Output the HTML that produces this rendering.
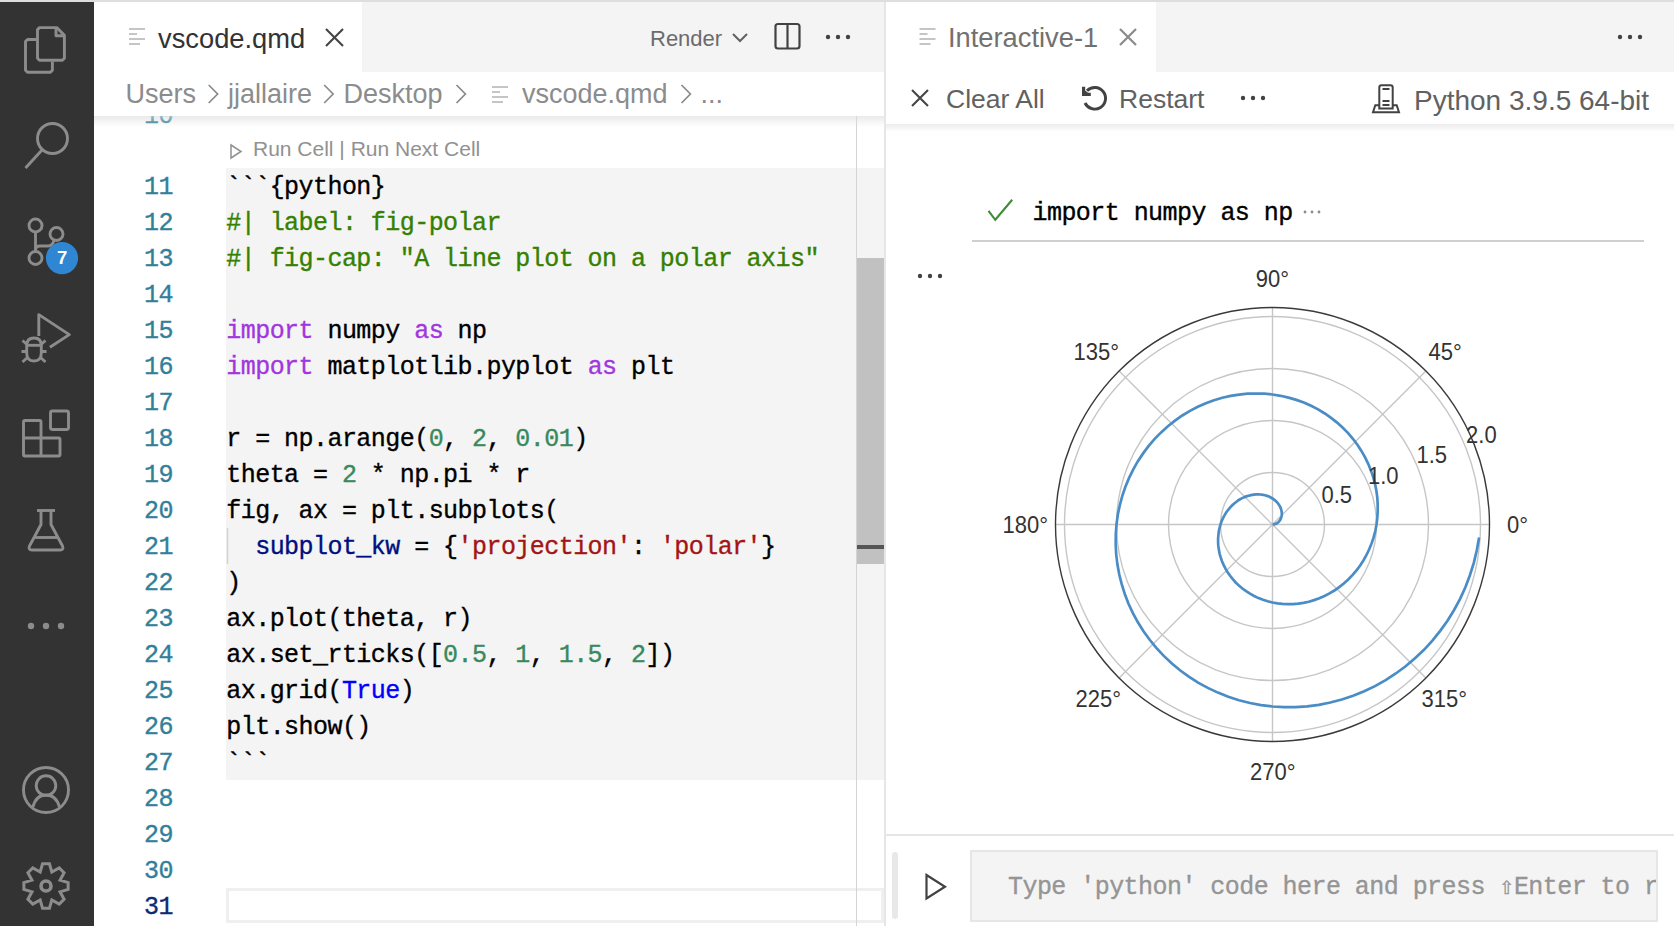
<!DOCTYPE html>
<html><head><meta charset="utf-8">
<style>
*{box-sizing:border-box;margin:0;padding:0}
html,body{width:1674px;height:926px;overflow:hidden;background:#fff;font-family:"Liberation Sans",sans-serif}
.abs{position:absolute}
#topline{position:absolute;left:0;top:0;width:1674px;height:2px;background:#dedede}
#act{position:absolute;left:0;top:2px;width:94px;height:924px;background:#333333}
#act svg{position:absolute;left:0;top:0}
/* left group */
#ltabs{position:absolute;left:94px;top:2px;width:790px;height:70px;background:#f4f4f4}
#ltab{position:absolute;left:94px;top:2px;width:268px;height:70px;background:#fff}
.ui{position:absolute;white-space:nowrap;line-height:1}
#crumbs{position:absolute;left:94px;top:72px;width:790px;height:44px;background:#fff}
#eshadow{position:absolute;left:94px;top:116px;width:790px;height:11px;background:linear-gradient(rgba(221,221,221,0.62),rgba(221,221,221,0))}
.ln{-webkit-text-stroke:0.35px currentColor;position:absolute;left:94px;width:79px;text-align:right;font-family:"Liberation Mono",monospace;font-size:25px;letter-spacing:-0.55px;padding-top:2px;line-height:36px;height:36px;color:#31809b}
.ln.cur{color:#0f2a75}
.cl{-webkit-text-stroke:0.35px currentColor;position:absolute;left:226.3px;font-family:"Liberation Mono",monospace;font-size:25px;letter-spacing:-0.55px;padding-top:2px;line-height:36px;height:36px;white-space:pre;color:#000}
.k{color:#000}.c{color:#348000}.p{color:#a236de}.n{color:#39895e}.v{color:#001080}.s{color:#a31515}.b{color:#0000ff}
#cellbg{position:absolute;left:226px;top:168px;width:658px;height:612px;background:#f4f4f4}
#sbtrack{position:absolute;left:856px;top:116px;width:28px;height:810px}
#sbline{position:absolute;left:856px;top:116px;width:1px;height:810px;background:#d4d4d4}
#slider{position:absolute;left:857px;top:258px;width:27px;height:306px;background:#c1c1c1}
#cursormark{position:absolute;left:857px;top:545px;width:27px;height:4px;background:#555}
#curline{position:absolute;left:226px;top:888px;width:658px;height:35px;border:3px solid #efefef}
#border{position:absolute;left:884px;top:2px;width:2px;height:924px;background:#e6e6e6}
/* right group */
#rtabs{position:absolute;left:886px;top:2px;width:788px;height:70px;background:#f4f4f4}
#rtab{position:absolute;left:886px;top:2px;width:270px;height:70px;background:#fff}
#rtool{position:absolute;left:886px;top:72px;width:788px;height:52px;background:#fff}
#rshadow{position:absolute;left:886px;top:124px;width:788px;height:8px;background:linear-gradient(#ececec,rgba(255,255,255,0))}
#sep{position:absolute;left:972px;top:240px;width:672px;height:2px;background:#d0d0d0}
#bline{position:absolute;left:886px;top:834px;width:788px;height:2px;background:#e6e6e6}
#ibar{position:absolute;left:892px;top:852px;width:6px;height:67px;border-radius:3px;background:#e8e8e8}
#ibox{position:absolute;left:970px;top:850px;width:688px;height:72px;background:#f4f4f4;border:2px solid #e6e6e6;overflow:hidden}
.mono{-webkit-text-stroke:0.35px currentColor;font-family:"Liberation Mono",monospace;font-size:25px;letter-spacing:-0.55px;white-space:pre;line-height:1}
.plt{font-family:"Liberation Sans",sans-serif;font-size:22px;color:#333;position:absolute;white-space:nowrap;line-height:1;transform:translate(-50%,-50%) scaleY(1.1)}
</style></head><body>
<div id="topline"></div>
<div id="act">
<svg width="94" height="924" viewBox="0 2 94 924" fill="none" stroke="#8c8c8c" stroke-width="2.9" stroke-linejoin="round">
  <!-- files -->
  <path d="M36 39.5 H27.5 L25.5 41.5 V70.3 L27.5 72.3 H50.4 L52.4 70.3 V61.5"/>
  <path d="M39.5 27.6 H56.8 L64.4 35.2 V58.3 L62.4 60.3 H39.5 L37.5 58.3 V29.6 Z"/>
  <path d="M56 28 V35.8 H64.4"/>
  <!-- search -->
  <circle cx="52.5" cy="138.5" r="15"/>
  <path d="M42 150 L25.5 168"/>
  <!-- scm -->
  <circle cx="35.5" cy="225.5" r="6.5"/>
  <circle cx="56.5" cy="234" r="6.5"/>
  <circle cx="35.5" cy="258" r="6.5"/>
  <path d="M35.5 232 V251.5"/>
  <path d="M35.5 250 Q35.5 246 40 246 H48 Q53 246 54 240"/>
  <!-- run debug -->
  <path d="M38.8 336 V314.6 L69.3 334.6 L49.9 347.2"/>
  <path d="M26.7 345.5 Q26.7 338 34 338 Q41.3 338 41.3 345.5 V353 Q41.3 361 34 361 Q26.7 361 26.7 353 Z"/>
  <path d="M27 345.3 H41" />
  <path d="M21.5 351.5 H26.7 M41.3 351.5 H46.5 M22.5 340.5 L27.5 345 M45.5 340.5 L40.5 345 M22.5 362 L27.5 357.5 M45.5 362 L40.5 357.5"/>
  <!-- extensions -->
  <rect x="50.5" y="411" width="18" height="18.5" rx="2"/>
  <path d="M23.5 422 Q23.5 420.5 25 420.5 H39.5 Q41 420.5 41 422 V438 H58.5 Q60 438 60 439.5 V454.5 Q60 456 58.5 456 H25 Q23.5 456 23.5 454.5 Z"/>
  <path d="M23.5 438 H41 V456"/>
  <!-- flask -->
  <path d="M37 510.5 H55"/>
  <path d="M41 510.5 V524.5 L29.5 546 Q28 550 32 550 H60 Q64 550 62.5 546 L51 524.5 V510.5"/>
  <path d="M34.5 537.5 H57.5"/>
  <!-- account -->
  <circle cx="46" cy="790" r="22.5"/>
  <circle cx="46" cy="785.6" r="9.8"/>
  <path d="M33 807 Q36 795 46 795 Q56 795 59.5 807"/>
  <!-- gear -->
  <path id="gear" d="M42.54 863.87 L49.46 863.87 L51.82 871.96 L59.20 867.91 L64.09 872.80 L60.04 880.18 L68.13 882.54 L68.13 889.46 L60.04 891.82 L64.09 899.20 L59.20 904.09 L51.82 900.04 L49.46 908.13 L42.54 908.13 L40.18 900.04 L32.80 904.09 L27.91 899.20 L31.96 891.82 L23.87 889.46 L23.87 882.54 L31.96 880.18 L27.91 872.80 L32.80 867.91 L40.18 871.96 Z" stroke-width="3" stroke-linejoin="miter"/>
  <circle cx="46" cy="886" r="5" stroke-width="3.6"/>
</svg>
<svg width="94" height="924" viewBox="0 2 94 924" style="position:absolute;left:0;top:0">
  <circle cx="31" cy="626" r="3.2" fill="#8c8c8c"/>
  <circle cx="46" cy="626" r="3.2" fill="#8c8c8c"/>
  <circle cx="61" cy="626" r="3.2" fill="#8c8c8c"/>
  <circle cx="62" cy="258.1" r="16.1" fill="#2f86d3"/>
  <text x="62.2" y="264.3" text-anchor="middle" font-family="Liberation Sans" font-weight="bold" font-size="18.5" fill="#fff">7</text>
</svg>
</div>

<!-- LEFT EDITOR GROUP -->
<div id="ltabs"></div>
<div id="ltab"></div>

<div class="ui" style="left:158px;top:25px;font-size:27.3px;color:#333">vscode.qmd</div>
<div class="ui" style="left:650px;top:28px;font-size:22px;color:#6b6b6b">Render</div>
<!-- editor -->
<div id="cellbg"></div>
<div id="curline"></div>
<div class="ln" style="top:97px;">10</div>
<div class="ln" style="top:168px">11</div>
<div class="ln" style="top:204px">12</div>
<div class="ln" style="top:240px">13</div>
<div class="ln" style="top:276px">14</div>
<div class="ln" style="top:312px">15</div>
<div class="ln" style="top:348px">16</div>
<div class="ln" style="top:384px">17</div>
<div class="ln" style="top:420px">18</div>
<div class="ln" style="top:456px">19</div>
<div class="ln" style="top:492px">20</div>
<div class="ln" style="top:528px">21</div>
<div class="ln" style="top:564px">22</div>
<div class="ln" style="top:600px">23</div>
<div class="ln" style="top:636px">24</div>
<div class="ln" style="top:672px">25</div>
<div class="ln" style="top:708px">26</div>
<div class="ln" style="top:744px">27</div>
<div class="ln" style="top:780px">28</div>
<div class="ln" style="top:816px">29</div>
<div class="ln" style="top:852px">30</div>
<div class="ln cur" style="top:888px">31</div>
<svg class="abs" style="left:0;top:0" width="884" height="926" fill="none">
  <path d="M231 145 L241 151.5 L231 158 Z" stroke="#919191" stroke-width="1.5" stroke-linejoin="miter"/>
  <path d="M227.5 528 V564" stroke="#d3d3d3" stroke-width="1.5"/>
</svg>
<div class="ui" style="left:253px;top:138px;font-size:21px;color:#919191">Run Cell | Run Next Cell</div>
<div class="cl" style="top:168px"><span class="k">```{python}</span></div>
<div class="cl" style="top:204px"><span class="c">#| label: fig-polar</span></div>
<div class="cl" style="top:240px"><span class="c">#| fig-cap: &quot;A line plot on a polar axis&quot;</span></div>
<div class="cl" style="top:312px"><span class="p">import</span><span class="k"> numpy </span><span class="p">as</span><span class="k"> np</span></div>
<div class="cl" style="top:348px"><span class="p">import</span><span class="k"> matplotlib.pyplot </span><span class="p">as</span><span class="k"> plt</span></div>
<div class="cl" style="top:420px"><span class="k">r = np.arange(</span><span class="n">0</span><span class="k">, </span><span class="n">2</span><span class="k">, </span><span class="n">0.01</span><span class="k">)</span></div>
<div class="cl" style="top:456px"><span class="k">theta = </span><span class="n">2</span><span class="k"> * np.pi * r</span></div>
<div class="cl" style="top:492px"><span class="k">fig, ax = plt.subplots(</span></div>
<div class="cl" style="top:528px"><span class="k">  </span><span class="v">subplot_kw</span><span class="k"> = {</span><span class="s">&#x27;projection&#x27;</span><span class="k">: </span><span class="s">&#x27;polar&#x27;</span><span class="k">}</span></div>
<div class="cl" style="top:564px"><span class="k">)</span></div>
<div class="cl" style="top:600px"><span class="k">ax.plot(theta, r)</span></div>
<div class="cl" style="top:636px"><span class="k">ax.set_rticks([</span><span class="n">0.5</span><span class="k">, </span><span class="n">1</span><span class="k">, </span><span class="n">1.5</span><span class="k">, </span><span class="n">2</span><span class="k">])</span></div>
<div class="cl" style="top:672px"><span class="k">ax.grid(</span><span class="b">True</span><span class="k">)</span></div>
<div class="cl" style="top:708px"><span class="k">plt.show()</span></div>
<div class="cl" style="top:744px"><span class="k">```</span></div>
<div id="sbline"></div>
<div id="slider"></div>
<div id="cursormark"></div>
<div id="eshadow"></div>
<div id="crumbs"></div>
<div class="ui" style="left:125.5px;top:80.7px;font-size:27px;color:#8c8c8c">Users</div>
<div class="ui" style="left:228px;top:80.7px;font-size:27px;color:#8c8c8c">jjallaire</div>
<div class="ui" style="left:343.5px;top:80.7px;font-size:27px;color:#8c8c8c">Desktop</div>
<div class="ui" style="left:522px;top:80.7px;font-size:27px;color:#8c8c8c">vscode.qmd</div>
<div class="ui" style="left:700.5px;top:80.7px;font-size:27px;color:#8c8c8c">...</div>

<svg class="abs" style="left:0;top:0" width="884" height="130" fill="none">
  <g stroke="#c5c5c5" stroke-width="2.2">
    <path d="M129 29 H145 M129 34 H137 M129 39 H145 M129 44 H140"/>
    <path d="M492 87 H508 M492 92 H500 M492 97 H508 M492 102 H503"/>
  </g>
  <path d="M326 29 L343 46 M343 29 L326 46" stroke="#444" stroke-width="2.1"/>
  <path d="M733 34 L740 41 L747 34" stroke="#616161" stroke-width="2"/>
  <rect x="775.5" y="24" width="24" height="24.5" rx="2.5" stroke="#424242" stroke-width="2.2"/>
  <path d="M787.5 24 V48.5" stroke="#424242" stroke-width="2.2"/>
  <g fill="#424242"><circle cx="828" cy="37" r="2.2"/><circle cx="838" cy="37" r="2.2"/><circle cx="848" cy="37" r="2.2"/></g>
  <g stroke="#8a8a8a" stroke-width="1.7">
    <path d="M208.7 85 L217.6 94 L208.7 103 M324.2 85 L333.1 94 L324.2 103 M456.5 85 L465.4 94 L456.5 103 M681.5 85 L690.4 94 L681.5 103"/>
  </g>
</svg>
<div id="border"></div>

<!-- RIGHT GROUP -->
<div id="rtabs"></div>
<div id="rtab"></div>
<div id="rtool"></div>
<div id="rshadow"></div>
<svg class="abs" style="left:886px;top:0" width="788" height="130" fill="none">
  <g transform="translate(-886 0)">
  <path d="M919.5 29 H935.5 M919.5 34 H927.5 M919.5 39 H935.5 M919.5 44 H930.5" stroke="#c5c5c5" stroke-width="2.2"/>
  <path d="M1120 29 L1136 45 M1136 29 L1120 45" stroke="#8a8a8a" stroke-width="2.2"/>
  <g fill="#424242"><circle cx="1620" cy="37" r="2.2"/><circle cx="1630" cy="37" r="2.2"/><circle cx="1640" cy="37" r="2.2"/></g>
  <path d="M912 90 L928 106 M928 90 L912 106" stroke="#444" stroke-width="2.05"/>
  <path d="M1087 90.8 A 10.8 10.8 0 1 1 1085 103" stroke="#424242" stroke-width="2.9"/>
  <path d="M1082 86.8 H1085.2 V90.5 L1088 92.8 H1090.8 V96 H1082 Z" fill="#424242"/>
  <g fill="#424242"><circle cx="1243" cy="98" r="2.2"/><circle cx="1253" cy="98" r="2.2"/><circle cx="1263" cy="98" r="2.2"/></g>
  <g stroke="#424242" stroke-width="2">
    <path d="M1379.3 108.5 V87.5 Q1379.3 85.3 1381.5 85.3 H1390.5 Q1392.7 85.3 1392.7 87.5 V108.5 Z"/>
    <path d="M1382.5 89 H1389.5 M1382.5 101 H1389.5 M1382.5 105 H1389.5"/>
    <path d="M1379.3 105.2 H1375.3 L1373 112.3 H1399 L1396.7 105.2 H1392.7"/>
  </g>
  </g>
</svg>
<div class="ui" style="left:948px;top:24px;font-size:27.3px;color:#717171">Interactive-1</div>
<div class="ui" style="left:946px;top:86px;font-size:26.5px;color:#616161">Clear All</div>
<div class="ui" style="left:1119px;top:86px;font-size:26.5px;color:#616161">Restart</div>
<div class="ui" style="left:1414px;top:87px;font-size:28px;color:#616161">Python 3.9.5 64-bit</div>

<svg class="abs" style="left:0;top:0" width="1674" height="926" fill="none">
  <path d="M988.5 210.8 L995.3 219.8 L1012.2 199.8" stroke="#3f8c38" stroke-width="2.1"/>
  <g fill="#8a8a8a"><circle cx="1305" cy="212" r="1.4"/><circle cx="1312" cy="212" r="1.4"/><circle cx="1319" cy="212" r="1.4"/></g>
  <g fill="#424242"><circle cx="920" cy="276" r="2.2"/><circle cx="930" cy="276" r="2.2"/><circle cx="940" cy="276" r="2.2"/></g>
  <!-- polar plot -->
  <g stroke="#c6c6c6" stroke-width="1.4">
    <circle cx="1272.5" cy="524.5" r="52"/>
    <circle cx="1272.5" cy="524.5" r="104"/>
    <circle cx="1272.5" cy="524.5" r="156"/>
    <circle cx="1272.5" cy="524.5" r="208"/>
    <path d="M1272.5 524.5 L1489.5 524.5 M1272.5 524.5 L1425.9 371.1 M1272.5 524.5 L1272.5 307.5 M1272.5 524.5 L1119.1 371.1 M1272.5 524.5 L1055.5 524.5 M1272.5 524.5 L1119.1 677.9 M1272.5 524.5 L1272.5 741.5 M1272.5 524.5 L1425.9 677.9"/>
  </g>
  <circle cx="1272.5" cy="524.5" r="217" stroke="#3a3a3a" stroke-width="1.4"/>
  <path d="M1272.5 524.5 L1273.5 524.4 L1274.6 524.2 L1275.6 523.9 L1276.5 523.5 L1277.4 522.9 L1278.3 522.2 L1279.1 521.4 L1279.8 520.5 L1280.4 519.5 L1280.9 518.4 L1281.3 517.2 L1281.6 516.0 L1281.8 514.6 L1281.8 513.3 L1281.7 511.9 L1281.4 510.5 L1281.0 509.0 L1280.5 507.6 L1279.8 506.1 L1278.9 504.7 L1277.9 503.3 L1276.8 502.0 L1275.5 500.8 L1274.1 499.6 L1272.5 498.5 L1270.8 497.5 L1269.0 496.6 L1267.0 495.9 L1265.0 495.3 L1262.9 494.8 L1260.6 494.5 L1258.3 494.4 L1256.0 494.4 L1253.6 494.6 L1251.1 495.1 L1248.6 495.7 L1246.2 496.4 L1243.7 497.4 L1241.2 498.6 L1238.8 500.0 L1236.5 501.7 L1234.2 503.5 L1232.0 505.5 L1230.0 507.7 L1228.0 510.0 L1226.2 512.6 L1224.5 515.3 L1223.0 518.2 L1221.6 521.3 L1220.5 524.5 L1219.6 527.8 L1218.8 531.3 L1218.4 534.8 L1218.1 538.5 L1218.1 542.2 L1218.3 545.9 L1218.9 549.7 L1219.6 553.6 L1220.7 557.4 L1222.0 561.2 L1223.6 564.9 L1225.5 568.6 L1227.6 572.3 L1230.1 575.8 L1232.8 579.2 L1235.7 582.5 L1238.9 585.6 L1242.4 588.5 L1246.1 591.2 L1250.0 593.7 L1254.1 596.0 L1258.5 598.1 L1263.0 599.8 L1267.7 601.3 L1272.5 602.5 L1277.5 603.4 L1282.5 603.9 L1287.7 604.2 L1292.9 604.1 L1298.2 603.6 L1303.5 602.8 L1308.8 601.7 L1314.1 600.1 L1319.3 598.3 L1324.5 596.0 L1329.5 593.4 L1334.4 590.5 L1339.2 587.1 L1343.8 583.5 L1348.2 579.5 L1352.4 575.2 L1356.3 570.6 L1360.0 565.7 L1363.4 560.5 L1366.5 555.0 L1369.2 549.3 L1371.6 543.4 L1373.6 537.3 L1375.3 531.0 L1376.5 524.5 L1377.3 517.9 L1377.7 511.2 L1377.7 504.4 L1377.3 497.6 L1376.4 490.8 L1375.0 483.9 L1373.2 477.1 L1370.9 470.4 L1368.2 463.8 L1365.1 457.3 L1361.4 450.9 L1357.4 444.8 L1352.9 438.8 L1348.1 433.1 L1342.8 427.7 L1337.1 422.6 L1331.1 417.9 L1324.8 413.5 L1318.1 409.4 L1311.1 405.8 L1303.8 402.6 L1296.3 399.9 L1288.5 397.6 L1280.6 395.8 L1272.5 394.5 L1264.3 393.7 L1255.9 393.5 L1247.6 393.7 L1239.1 394.6 L1230.7 395.9 L1222.3 397.8 L1214.0 400.3 L1205.9 403.3 L1197.8 406.8 L1190.0 410.9 L1182.3 415.5 L1175.0 420.6 L1167.9 426.3 L1161.1 432.4 L1154.7 438.9 L1148.7 445.9 L1143.1 453.4 L1137.9 461.2 L1133.3 469.4 L1129.1 477.9 L1125.4 486.7 L1122.3 495.9 L1119.8 505.2 L1117.8 514.8 L1116.5 524.5 L1115.8 534.4 L1115.7 544.3 L1116.2 554.3 L1117.4 564.3 L1119.2 574.3 L1121.7 584.2 L1124.8 594.0 L1128.5 603.7 L1132.9 613.1 L1137.9 622.3 L1143.5 631.2 L1149.7 639.8 L1156.5 648.1 L1163.8 655.9 L1171.6 663.3 L1180.0 670.3 L1188.8 676.7 L1198.1 682.6 L1207.8 687.9 L1217.9 692.6 L1228.3 696.8 L1239.0 700.2 L1250.0 703.0 L1261.1 705.1 L1272.5 706.5 L1284.0 707.2 L1295.6 707.1 L1307.2 706.3 L1318.8 704.8 L1330.3 702.5 L1341.8 699.5 L1353.1 695.8 L1364.2 691.3 L1375.0 686.1 L1385.6 680.2 L1395.8 673.5 L1405.6 666.3 L1415.0 658.3 L1424.0 649.8 L1432.4 640.6 L1440.2 630.9 L1447.5 620.7 L1454.1 610.0 L1460.1 598.8 L1465.4 587.2 L1469.9 575.2 L1473.8 562.9 L1476.8 550.3 L1479.1 537.5" stroke="#4a8cc6" stroke-width="2.7"/>
  <path d="M926.5 875 L945 886.7 L926.5 898.5 Z" stroke="#424242" stroke-width="2.2" stroke-linejoin="miter"/>
</svg>
<div class="mono abs" style="left:1032.5px;top:201px;color:#000">import numpy as np</div>
<div class="plt" style="left:1272.5px;top:278.6px">90°</div>
<div class="plt" style="left:1096.3px;top:351.7px">135°</div>
<div class="plt" style="left:1445.1px;top:351.7px">45°</div>
<div class="plt" style="left:1025.3px;top:525.3px">180°</div>
<div class="plt" style="left:1517.6px;top:525.3px">0°</div>
<div class="plt" style="left:1098.3px;top:699.0px">225°</div>
<div class="plt" style="left:1444.3px;top:699.0px">315°</div>
<div class="plt" style="left:1272.7px;top:771.5px">270°</div>
<div class="plt" style="left:1336.8px;top:495.1px">0.5</div>
<div class="plt" style="left:1383.2px;top:475.5px">1.0</div>
<div class="plt" style="left:1431.8px;top:455.0px">1.5</div>
<div class="plt" style="left:1481.4px;top:435.1px">2.0</div>

<div id="sep"></div>
<div id="bline"></div>
<div id="ibar"></div>
<div id="ibox"><div class="mono" style="position:absolute;left:36px;top:23px;color:#959595">Type 'python' code here and press ⇧Enter to run</div></div>
</body></html>
